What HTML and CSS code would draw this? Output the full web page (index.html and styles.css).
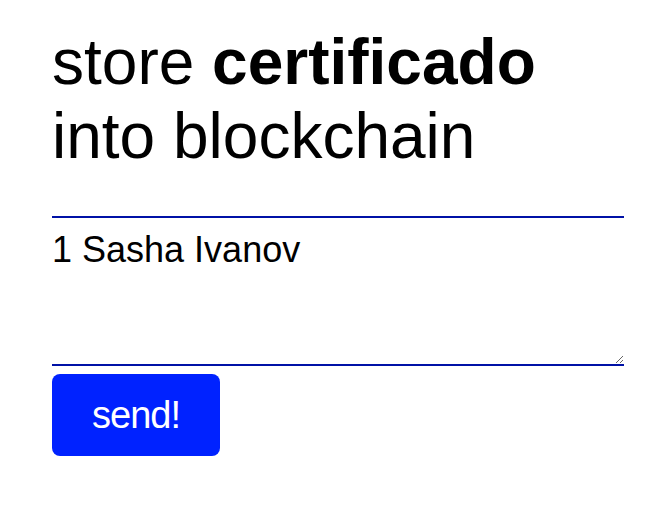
FILE: index.html
```html
<!DOCTYPE html>
<html lang="en">
<head>
    <meta charset="UTF-8">
    <meta name="viewport" content="width=device-width, initial-scale=1.0">
    <title>Store certificado</title>
    <link rel="stylesheet" href="styles.css">
</head>
<body>
    <div class="container">
        <h1 class="title">store <b>certificado</b><br>into blockchain</h1>
        <form class="cert-form">
            <textarea class="cert-input" name="cert">1 Sasha Ivanov</textarea>
            <button type="button" class="send-btn">send!</button>
        </form>
    </div>
</body>
</html>
```

FILE: styles.css
```css
body {
    margin: 0;
    background: #fff;
    color: #000;
    font-family: "Liberation Sans", Arial, Helvetica, sans-serif;
}

.container {
    padding: 25px 42px 40px 52px;
}

.title {
    margin: 0 0 43px;
    font-size: 64px;
    line-height: 74px;
    font-weight: 400;
}

.title b {
    font-weight: 700;
}

.cert-form {
    display: flex;
    flex-direction: column;
    align-items: flex-start;
    gap: 8px;
}

.cert-input {
    display: block;
    box-sizing: border-box;
    width: 100%;
    height: 150px;
    margin: 0;
    padding: 11px 0 0;
    border: none;
    border-top: 2px solid #0011a6;
    border-bottom: 2px solid #0011a6;
    outline: none;
    font-family: inherit;
    font-size: 36px;
    color: #000;
    background: #fff;
}

.send-btn {
    width: 168px;
    height: 82px;
    border: none;
    border-radius: 8px;
    background-color: #0022ff;
    color: #fff;
    font-family: inherit;
    font-size: 38px;
    letter-spacing: -1px;
    cursor: pointer;
}
```
